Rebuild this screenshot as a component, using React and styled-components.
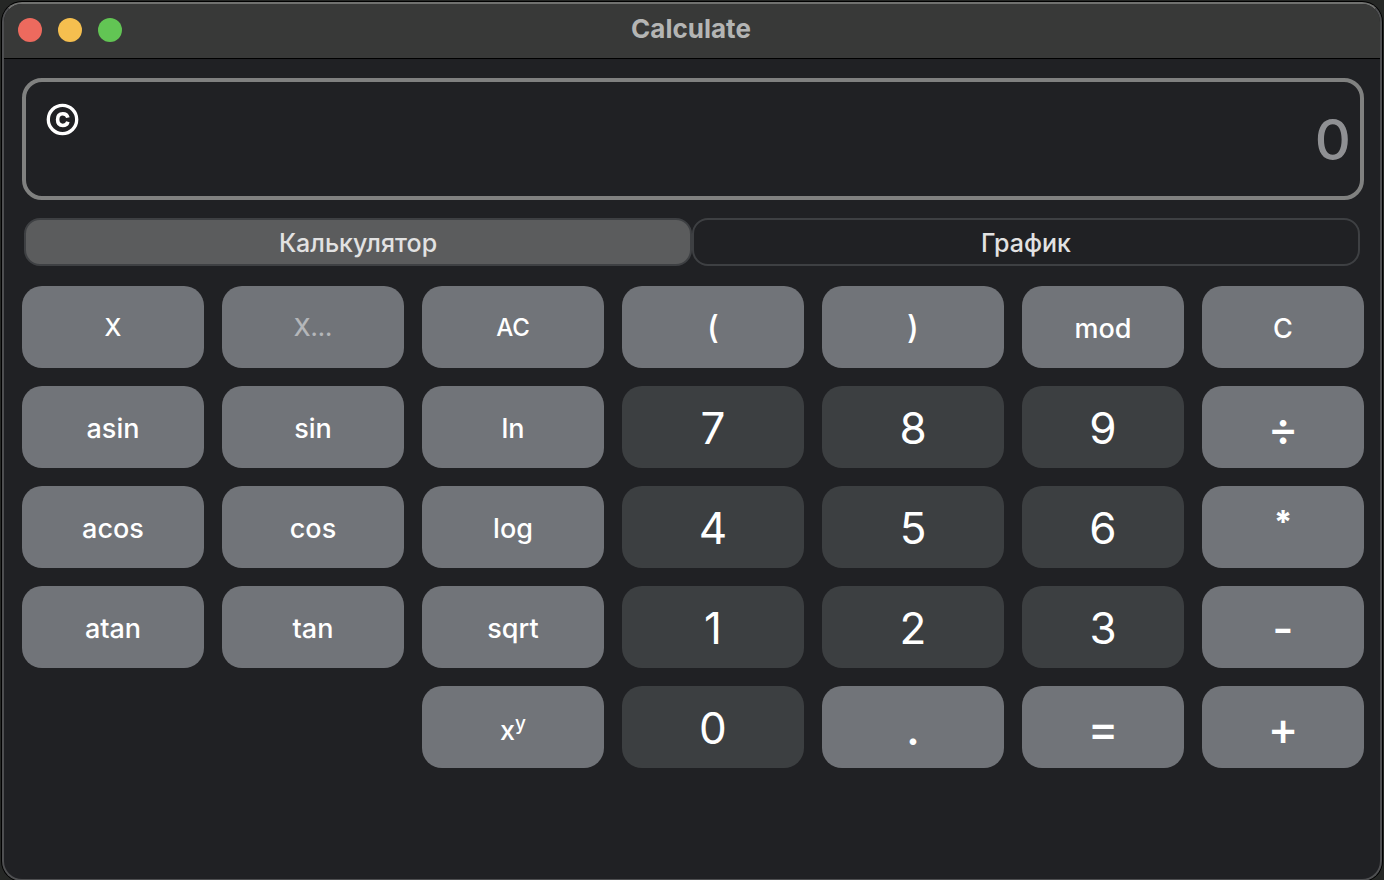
import React from "react";
import styled, { createGlobalStyle } from "styled-components";

const GlobalStyle = createGlobalStyle`
  * { box-sizing: border-box; }
  body {
    margin: 0;
    background: #252725;
    font-family: Inter, "Liberation Sans", sans-serif;
    color: #ffffff;
  }
  button, input { font: inherit; color: inherit; }
`;

const Desktop = styled.div`
  display: flex;
  height: 100vh;
  min-height: 780px;
  padding: 2px 2px 0;
  overflow: hidden;
`;

const Window = styled.main`
  flex: 1;
  align-self: flex-start;
  height: calc(100% + 1px);
  border: 2px solid #4e4f51;
  border-top-color: #70716f;
  border-radius: 20px;
  background: #202124;
  box-shadow: 0 0 0 1px #000000;
  overflow: hidden;
`;

const TitleBar = styled.header`
  display: grid;
  grid-template-columns: 1fr auto 1fr;
  align-items: center;
  height: 55px;
  padding: 0 14px 2px;
  background: #383938;
  border-bottom: 1px solid #000000;
`;

const Lights = styled.div`
  display: flex;
  gap: 16px;
`;

const Light = styled.button`
  width: 24px;
  height: 24px;
  padding: 0;
  border: 0;
  border-radius: 50%;
  background: ${(p) => p.$color};
`;

const Title = styled.h1`
  margin: 0;
  padding: 0 2px 2px 0;
  font-size: 26px;
  line-height: 32px;
  font-weight: 700;
  color: #b4b5b4;
`;

const Content = styled.div`
  display: flex;
  flex-direction: column;
  padding: 19px 16px 20px 18px;
`;

const Display = styled.div`
  display: flex;
  align-items: flex-start;
  height: 122px;
  padding: 14px 9px 0 20px;
  border: 4px solid #808180;
  border-radius: 20px;
`;

const Copyright = styled.button`
  padding: 7px 0;
  border: 0;
  background: none;
  line-height: 0;
`;

const Entry = styled.input`
  flex: 1;
  min-width: 0;
  height: 88px;
  padding: 0;
  border: 0;
  outline: 0;
  background: none;
  font-size: 56px;
  font-weight: 450;
  text-align: right;
  &::placeholder { color: #8f9093; opacity: 1; }
`;

const Tabs = styled.div`
  display: grid;
  grid-template-columns: 1fr 1fr;
  margin: 18px 4px 20px 2px;
`;

const Tab = styled.button`
  height: 48px;
  padding: 2px 0 0;
  border: 2px solid #3e4043;
  border-radius: 16px;
  background: ${(p) => (p.$active ? "#5b5c5d" : "transparent")};
  color: #e2e2e2;
  font-size: 25px;
  font-weight: 450;
  line-height: 32px;
`;

const Keypad = styled.div`
  display: grid;
  grid-template-columns: repeat(5, 182fr) repeat(2, 162fr);
  grid-auto-rows: 82px;
  gap: 18px;
`;

const sizes = {
  small: { font: "24px", weight: 450, padding: "2px 0 0" },
  word: { font: "27px", weight: 450, padding: "3px 0 0" },
  paren: { font: "32px", weight: 450, padding: "2px 0 0" },
  digit: { font: "44px", weight: 400, padding: "2px 0 0" },
  sign: { font: "46px", weight: 450, padding: "2px 0 0" },
  star: { font: "32px", weight: 800, padding: "0 0 8px" },
};

const Key = styled.button`
  min-width: 0;
  padding: ${(p) => sizes[p.$size].padding};
  border: 0;
  border-radius: 20px;
  background: ${(p) => (p.$size === "digit" ? "#3c3f41" : "#717479")};
  color: ${(p) => (p.disabled ? "#b4b6b9" : "#ffffff")};
  font-size: ${(p) => sizes[p.$size].font};
  font-weight: ${(p) => sizes[p.$size].weight};
  line-height: 1;
`;

const Power = styled.sup`
  font-size: 19px;
  font-weight: 500;
  line-height: 1;
  vertical-align: 10px;
`;

const Blank = styled.div`
  grid-column: span 2;
`;

const rows = [
  [["X", "small"], ["X...", "small", true], ["AC", "small"], ["(", "paren"], [")", "paren"], ["mod", "word"], ["C", "word"]],
  [["asin", "word"], ["sin", "word"], ["ln", "word"], ["7", "digit"], ["8", "digit"], ["9", "digit"], ["÷", "sign"]],
  [["acos", "word"], ["cos", "word"], ["log", "word"], ["4", "digit"], ["5", "digit"], ["6", "digit"], ["*", "star"]],
  [["atan", "word"], ["tan", "word"], ["sqrt", "word"], ["1", "digit"], ["2", "digit"], ["3", "digit"], ["-", "sign"]],
];

const lastRow = [["0", "digit"], [".", "sign"], ["=", "sign"], ["+", "sign"]];

const renderKey = ([label, size, disabled]) => (
  <Key key={label} type="button" $size={size} disabled={disabled}>{label}</Key>
);

const CopyrightIcon = () => (
  <svg width="33" height="33" viewBox="0 0 33 33" fill="none" stroke="#ffffff" aria-hidden="true">
    <circle cx="16.5" cy="16.5" r="14.2" strokeWidth="3.3" />
    <path d="M21.9 14.6C21.3 12.1 19.4 10.7 16.8 10.7C13.6 10.7 11.6 12.9 11.6 16.6C11.6 20.3 13.6 22.5 16.8 22.5C19.4 22.5 21.3 21.1 21.9 18.7" strokeWidth="3.6" />
  </svg>
);

export default function App() {
  return (
    <>
      <GlobalStyle />
      <Desktop>
        <Window>
          <TitleBar>
            <Lights>
              <Light type="button" aria-label="Close" $color="#ed6a5e" />
              <Light type="button" aria-label="Minimize" $color="#f5bf4f" />
              <Light type="button" aria-label="Zoom" $color="#62c554" />
            </Lights>
            <Title>Calculate</Title>
          </TitleBar>
          <Content>
            <Display>
              <Copyright type="button" aria-label="Copyright"><CopyrightIcon /></Copyright>
              <Entry type="text" aria-label="Expression" placeholder="0" />
            </Display>
            <Tabs role="tablist">
              <Tab type="button" role="tab" aria-selected="true" $active>Калькулятор</Tab>
              <Tab type="button" role="tab" aria-selected="false">График</Tab>
            </Tabs>
            <Keypad>
              {rows.flat().map(renderKey)}
              <Blank />
              <Key type="button" $size="word">x<Power>y</Power></Key>
              {lastRow.map(renderKey)}
            </Keypad>
          </Content>
        </Window>
      </Desktop>
    </>
  );
}
